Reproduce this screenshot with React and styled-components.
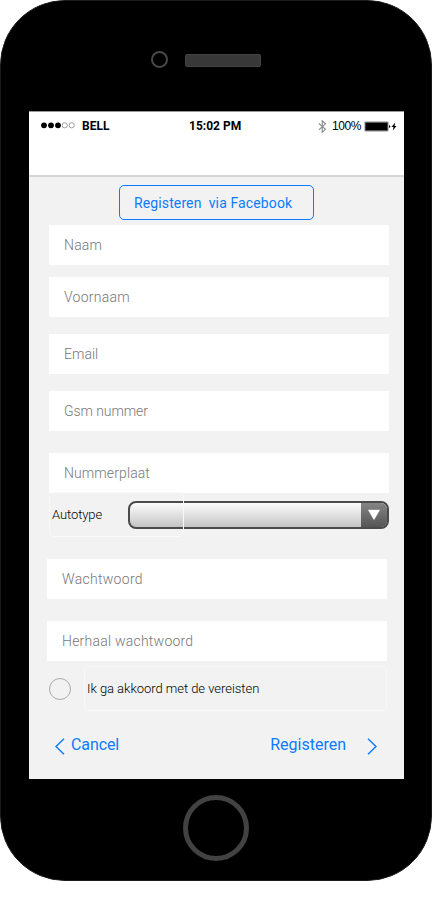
import React from "react";
import styled, { createGlobalStyle } from "styled-components";

const GlobalStyle = createGlobalStyle`
  * { box-sizing: border-box; }
  body { margin: 0; background: #fff; font-family: Roboto, "Liberation Sans", sans-serif; }
  button, input { font-family: inherit; margin: 0; }
`;

const Phone = styled.main`
  width: 432px;
  height: 881px;
  padding: 0 28px;
  display: flex;
  flex-direction: column;
  background: #000;
  border: 1px solid #1b1b1b;
  border-radius: 65px;
`;

const Earpiece = styled.div`
  height: 110px;
  flex: none;
  display: flex;
  gap: 17px;
  padding: 50px 0 0 122px;
`;

const Camera = styled.div`
  width: 17px;
  height: 17px;
  border: 2.5px solid #484848;
  border-radius: 50%;
`;

const Speaker = styled.div`
  width: 76px;
  height: 13px;
  margin-top: 3px;
  background: #383838;
  border: 1px solid #444;
  border-radius: 2px;
`;

const Screen = styled.section`
  width: 375px;
  height: 668px;
  flex: none;
  display: flex;
  flex-direction: column;
  background: #f2f2f2;
`;

const Header = styled.header`
  height: 66px;
  flex: none;
  background: #fff;
  border-top: 1px solid #999;
  border-bottom: 2px solid #d6d6d6;
`;

const StatusBar = styled.div`
  height: 28px;
  padding: 0 6px 0 12px;
  display: grid;
  grid-template-columns: 148px 1fr auto;
  align-items: center;
  color: #000;
`;

const StatusGroup = styled.div`
  display: flex;
  align-items: center;
`;

const StatusText = styled.span`
  font-size: 12px;
  line-height: 16px;
  font-weight: 700;
  margin-left: ${(p) => p.$left || 0}px;
  white-space: nowrap;
`;

const BatteryLevel = styled(StatusText)`
  width: 29px;
  font-family: "Liberation Sans", Arial, sans-serif;
  font-size: 12px;
  font-weight: 400;
  letter-spacing: -0.45px;
`;

const Battery = styled.svg`
  margin-left: 3px;
  display: block;
`;

const Glyph = styled.svg`
  display: block;
  flex: none;
`;

const Form = styled.form`
  display: flex;
  flex-direction: column;
  padding: 8px 15px 0 18px;
`;

const FacebookButton = styled.button`
  width: 195px;
  height: 35px;
  margin: 0 0 5px 72px;
  padding: 1px 0 0 14px;
  text-align: left;
  white-space: pre;
  background: transparent;
  border: 1px solid #0b7bff;
  border-radius: 5px;
  color: #0b7bff;
  font-size: 14px;
  letter-spacing: 0.12px;
`;

const Field = styled.input`
  width: 340px;
  height: 40px;
  flex: none;
  padding: 0 15px;
  margin: 0 0 ${(p) => p.$gap}px ${(p) => (p.$indent ? 2 : 0)}px;
  border: 0;
  border-radius: 0;
  outline: 0;
  background: #fff;
  color: #333;
  font-size: 14px;
  font-weight: 300;
  letter-spacing: ${(p) => p.$track || 0}px;
  &::placeholder { color: #777; opacity: 1; }
`;

const TypeRow = styled.div`
  height: 67px;
  display: grid;
  grid-template-columns: 2px 79px 56px 1fr;
  grid-template-rows: 45px;
  margin-top: -1px;
`;

const Caption = styled.label`
  height: 45px;
  display: flex;
  align-items: center;
  padding-left: 2px;
  border: 1px solid #f8f8f8;
  border-radius: 5px;
  font-size: 13px;
  font-weight: 300;
  letter-spacing: ${(p) => p.$track}px;
  color: #000;
`;

const TypeCaption = styled(Caption)`
  grid-column: 2 / 4;
  grid-row: 1;
  z-index: 1;
`;

const Select = styled.div`
  grid-column: 3 / 5;
  grid-row: 1;
  height: 28px;
  margin-top: 9px;
  display: flex;
  justify-content: flex-end;
  overflow: hidden;
  border: 2px solid #4b4b4b;
  border-radius: 8px;
  background: linear-gradient(#fdfdfd, #c4c4c4);
`;

const SelectArrow = styled.div`
  width: 26px;
  display: flex;
  align-items: center;
  justify-content: center;
  background: linear-gradient(#858585, #555);
`;

const Agreement = styled.div`
  height: 45px;
  margin-top: 5px;
  display: flex;
  align-items: center;
  gap: 13px;
  padding-left: 2px;
`;

const Radio = styled.div`
  width: 22px;
  height: 22px;
  border: 1px solid #aaa;
  border-radius: 50%;
`;

const AgreementCaption = styled(Caption)`
  width: 303px;
`;

const Footer = styled.footer`
  display: flex;
  justify-content: space-between;
  padding: 21px 12px 0 8px;
`;

const NavButton = styled.button`
  height: 26px;
  display: flex;
  align-items: center;
  gap: ${(p) => p.$gap}px;
  padding: 0;
  border: 0;
  background: none;
  color: #0b7bff;
  font-size: 16px;
  line-height: 20px;
  letter-spacing: ${(p) => p.$track}px;
  svg { margin-top: 3px; }
`;

const HomeBar = styled.div`
  display: flex;
  justify-content: center;
  padding-top: 16px;
`;

const HomeButton = styled.div`
  width: 66px;
  height: 66px;
  border: 5px solid #424242;
  border-radius: 50%;
`;

function Signal() {
  return (
    <Glyph width="35" height="8" viewBox="0 0 35 8">
      {[3, 10, 17].map((x) => <circle key={x} cx={x} cy="3.3" r="2.9" />)}
      {[23.7, 30.7].map((x) => (
        <circle key={x} cx={x} cy="3.3" r="2.6" fill="none" stroke="#777" strokeWidth="0.7" />
      ))}
    </Glyph>
  );
}

function Bluetooth() {
  return (
    <Glyph width="9" height="13" viewBox="0 0 9 13" fill="none" stroke="#888" strokeWidth="1.1">
      <path d="M.8 3.3 7.5 9.3 4.2 12.2V.8L7.5 3.8.8 9.8" />
    </Glyph>
  );
}

function Chevron({ flip }) {
  return (
    <Glyph width="10" height="17" viewBox="0 0 10 17" fill="none" stroke="#0b7bff" strokeWidth="1.4">
      <path d={flip ? "M1 .8 9 8.5 1 16.2" : "M9 .8 1 8.5 9 16.2"} />
    </Glyph>
  );
}

export default function App() {
  return (
    <>
      <GlobalStyle />
      <Phone>
        <Earpiece>
          <Camera />
          <Speaker />
        </Earpiece>
        <Screen>
          <Header>
            <StatusBar>
              <StatusGroup>
                <Signal />
                <StatusText $left={6}>BELL</StatusText>
              </StatusGroup>
              <StatusText>15:02 PM</StatusText>
              <StatusGroup>
                <Bluetooth />
                <BatteryLevel $left={5}>100%</BatteryLevel>
                <Battery width="34" height="11" viewBox="0 0 34 11">
                  <rect x=".5" y=".6" width="24" height="9.8" rx="1" fill="#888" />
                  <rect x="1.5" y="1.7" width="22" height="7.6" />
                  <path d="M25 4.2q1.3 0 1.3 1.3T25 6.8z" />
                  <path d="M31.2 1.5 27.5 6h2L28.8 9.5 32.5 5h-2z" />
                </Battery>
              </StatusGroup>
            </StatusBar>
          </Header>
          <Form onSubmit={(e) => e.preventDefault()}>
            <FacebookButton type="button">{"Registeren  via Facebook"}</FacebookButton>
            <Field placeholder="Naam" $gap={12} $track={0.2} $indent />
            <Field placeholder="Voornaam" $gap={17} $track={0.27} $indent />
            <Field placeholder="Email" $gap={17} $indent />
            <Field placeholder="Gsm nummer" $gap={22} $track={-0.08} $indent />
            <Field placeholder="Nummerplaat" $gap={0} $track={0.1} $indent />
            <TypeRow>
              <TypeCaption $track={-0.1}>Autotype</TypeCaption>
              <Select>
                <SelectArrow>
                  <Glyph width="14" height="12" viewBox="0 0 14 12">
                    <path d="M.5 .5h13L7 11.5z" fill="#fff" stroke="#555" strokeWidth=".4" />
                  </Glyph>
                </SelectArrow>
              </Select>
            </TypeRow>
            <Field type="password" placeholder="Wachtwoord" $gap={22} $track={0.3} />
            <Field type="password" placeholder="Herhaal wachtwoord" $gap={0} $track={0.23} />
            <Agreement>
              <Radio />
              <AgreementCaption $track={-0.04}>Ik ga akkoord met de vereisten</AgreementCaption>
            </Agreement>
            <Footer>
              <NavButton type="button" $gap={6} $track={-0.1}>
                <Chevron />
                Cancel
              </NavButton>
              <NavButton type="submit" $gap={21} $track={0}>
                Registeren
                <Chevron flip />
              </NavButton>
            </Footer>
          </Form>
        </Screen>
        <HomeBar>
          <HomeButton />
        </HomeBar>
      </Phone>
    </>
  );
}
